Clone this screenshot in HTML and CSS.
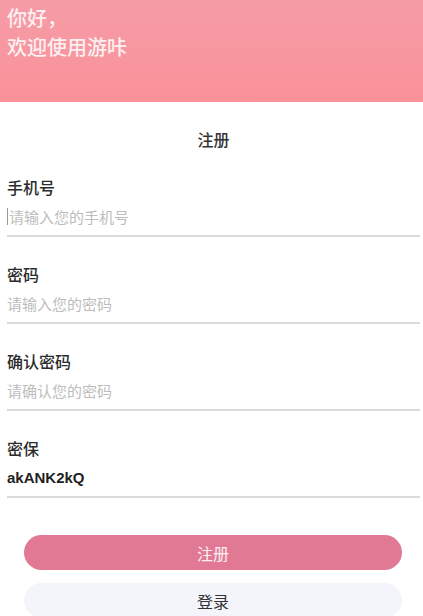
FILE: index.html
```html
<!DOCTYPE html>
<html lang="zh-CN">
<head>
<meta charset="utf-8">
<title>注册</title>
<link rel="stylesheet" href="styles.css">
</head>
<body>
<header class="hero">
  <div class="hero-line">你好，</div>
  <div class="hero-line">欢迎使用游咔</div>
</header>
<main class="page">
  <h1 class="title">注册</h1>
  <form class="form">
    <div class="field">
      <label class="label">手机号</label>
      <div class="control">
        <span class="caret"></span>
        <input class="input" type="text" placeholder="请输入您的手机号">
      </div>
    </div>
    <div class="field">
      <label class="label">密码</label>
      <div class="control">
        <input class="input" type="password" placeholder="请输入您的密码">
      </div>
    </div>
    <div class="field">
      <label class="label">确认密码</label>
      <div class="control">
        <input class="input" type="password" placeholder="请确认您的密码">
      </div>
    </div>
    <div class="field">
      <label class="label">密保</label>
      <div class="control">
        <input class="input input-value" type="text" value="akANK2kQ">
      </div>
    </div>
    <div class="actions">
      <button class="btn btn-primary" type="button">注册</button>
      <button class="btn btn-light" type="button">登录</button>
    </div>
  </form>
</main>
</body>
</html>
```
FILE: styles.css
```css
* { box-sizing: border-box; }
html, body {
  margin: 0;
  padding: 0;
  background: #ffffff;
  font-family: "Noto Sans CJK SC", "Noto Sans", "Liberation Sans", sans-serif;
  color: #333333;
  overflow: hidden;
}
.hero {
  height: 102px;
  padding: 3px 7px 0;
  background: linear-gradient(to bottom, #f59ca7 0%, #f8969f 60%, #fb9099 100%);
  color: #fdf0f2;
  font-size: 20px;
  font-weight: 500;
  line-height: 29px;
}
.page {
  padding: 0 3px 0 7px;
}
.title {
  margin: 26px 0 26px;
  font-size: 16px;
  font-weight: 500;
  line-height: 22px;
  text-align: center;
  color: #333333;
}
.form {
  display: flex;
  flex-direction: column;
}
.field {
  display: flex;
  flex-direction: column;
  margin-bottom: 26px;
}
.label {
  font-size: 16px;
  font-weight: 500;
  line-height: 22px;
  color: #2b2b2b;
}
.control {
  display: flex;
  align-items: center;
  height: 39px;
  border-bottom: 2px solid #dadada;
}
.caret {
  width: 1px;
  height: 17px;
  background: #9a9a9a;
  margin-right: 1px;
}
.input {
  flex: 1;
  border: none;
  outline: none;
  padding: 0;
  margin: 0;
  background: transparent;
  font-family: inherit;
  font-size: 15px;
  line-height: 22px;
  color: #333333;
}
.input::placeholder {
  color: #bdbdbd;
}
.input-value {
  font-family: "Liberation Sans", "Noto Sans", sans-serif;
  font-weight: 700;
  color: #1f1f1f;
}
.actions {
  display: flex;
  flex-direction: column;
  gap: 13px;
  padding: 11px 18px 0 17px;
}
.btn {
  height: 35px;
  border: none;
  border-radius: 18px;
  font-family: inherit;
  font-size: 16px;
  line-height: 22px;
  padding: 0;
}
.btn-primary {
  background: #e27994;
  color: #fdeff2;
}
.btn-light {
  background: #f4f5fb;
  color: #333333;
}
```
